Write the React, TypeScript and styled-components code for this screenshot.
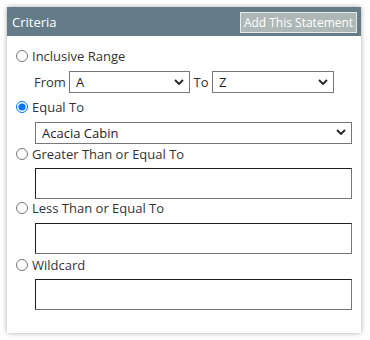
import React from "react";
import styled, { createGlobalStyle } from "styled-components";

const Global = createGlobalStyle`
  html, body { margin: 0; padding: 0; background: #ffffff; }
  body { font-family: "Open Sans", "Liberation Sans", sans-serif; }
`;

const Page = styled.div`
  padding: 7px 9px 8px 7px;
`;

const Panel = styled.div`
  width: 354px;
  background: #ffffff;
  box-shadow: 0 0 5px rgba(0, 0, 0, 0.35);
`;

const Header = styled.div`
  height: 29px;
  background: #637c88;
  display: flex;
  align-items: center;
  justify-content: space-between;
  padding: 0 4px 0 5px;
  box-sizing: border-box;
`;

const Title = styled.span`
  color: #ffffff;
  font-size: 13px;
`;

const AddButton = styled.button`
  height: 21px;
  width: 117px;
  background: #adb8b6;
  border: 1px solid #e6eaea;
  color: #ffffff;
  font-family: "Open Sans", "Liberation Sans", sans-serif;
  font-size: 12px;
  padding: 0;
  margin-top: 1px;
`;

const Body = styled.div`
  display: flex;
  flex-direction: column;
  padding: 11px 9px 23px 9px;
`;

const OptionRow = styled.label<{ $mt: number }>`
  display: flex;
  align-items: center;
  height: 18px;
  margin-top: ${(p) => p.$mt}px;
  font-size: 13px;
  color: #333333;
  gap: 4px;
`;

const Radio = styled.input`
  width: 12px;
  height: 12px;
  margin: 0;
`;

const RangeRow = styled.div`
  display: flex;
  align-items: center;
  margin-top: 6px;
  padding-left: 18px;
  font-size: 13px;
  color: #333333;
`;

const RangeLabel = styled.span<{ $w: number; $center?: boolean }>`
  width: ${(p) => p.$w}px;
  text-align: ${(p) => (p.$center ? "center" : "left")};
`;

const SelectWrap = styled.div<{ $w: number; $mt?: number; $ml?: number }>`
  position: relative;
  width: ${(p) => p.$w}px;
  height: 22px;
  margin-top: ${(p) => p.$mt ?? 0}px;
  margin-left: ${(p) => p.$ml ?? 0}px;
`;

const Select = styled.select`
  appearance: none;
  -webkit-appearance: none;
  width: 100%;
  height: 100%;
  border: 1px solid #767676;
  border-radius: 0;
  background: #ffffff;
  font-family: "Open Sans", "Liberation Sans", sans-serif;
  font-size: 13px;
  color: #222222;
  padding: 0 0 0 6px;
  margin: 0;
  outline: none;
`;

const Chevron = styled.svg`
  position: absolute;
  right: 6px;
  top: 8px;
  width: 10px;
  height: 6px;
  pointer-events: none;
`;

const TextBox = styled.input<{ $mt: number }>`
  box-sizing: border-box;
  width: 317px;
  height: 31px;
  margin: ${(p) => p.$mt}px 0 0 19px;
  border: 1px solid #767676;
  border-top-color: #1e1e1e;
  border-left-color: #1e1e1e;
  border-radius: 0;
  padding: 0 6px;
  font-family: "Open Sans", "Liberation Sans", sans-serif;
  font-size: 13px;
  outline: none;
`;

const Arrow = () => (
  <Chevron viewBox="0 0 10 6">
    <path d="M1 1 L5 5 L9 1" fill="none" stroke="#222" strokeWidth="1.8" />
  </Chevron>
);

export default function App() {
  return (
    <>
      <Global />
      <Page>
        <Panel>
          <Header>
            <Title>Criteria</Title>
            <AddButton>Add This Statement</AddButton>
          </Header>
          <Body>
            <OptionRow $mt={0}>
              <Radio type="radio" name="crit" />
              Inclusive Range
            </OptionRow>
            <RangeRow>
              <RangeLabel $w={35}>From</RangeLabel>
              <SelectWrap $w={121}>
                <Select defaultValue="A">
                  <option>A</option>
                </Select>
                <Arrow />
              </SelectWrap>
              <RangeLabel $w={22} $center>To</RangeLabel>
              <SelectWrap $w={122}>
                <Select defaultValue="Z">
                  <option>Z</option>
                </Select>
                <Arrow />
              </SelectWrap>
            </RangeRow>
            <OptionRow $mt={5}>
              <Radio type="radio" name="crit" defaultChecked />
              Equal To
            </OptionRow>
            <SelectWrap $w={317} $mt={5} $ml={19}>
              <Select defaultValue="Acacia Cabin">
                <option>Acacia Cabin</option>
              </Select>
              <Arrow />
            </SelectWrap>
            <OptionRow $mt={2}>
              <Radio type="radio" name="crit" />
              Greater Than or Equal To
            </OptionRow>
            <TextBox $mt={5} />
            <OptionRow $mt={0}>
              <Radio type="radio" name="crit" />
              Less Than or Equal To
            </OptionRow>
            <TextBox $mt={6} />
            <OptionRow $mt={2}>
              <Radio type="radio" name="crit" />
              Wildcard
            </OptionRow>
            <TextBox $mt={5} />
          </Body>
        </Panel>
      </Page>
    </>
  );
}
